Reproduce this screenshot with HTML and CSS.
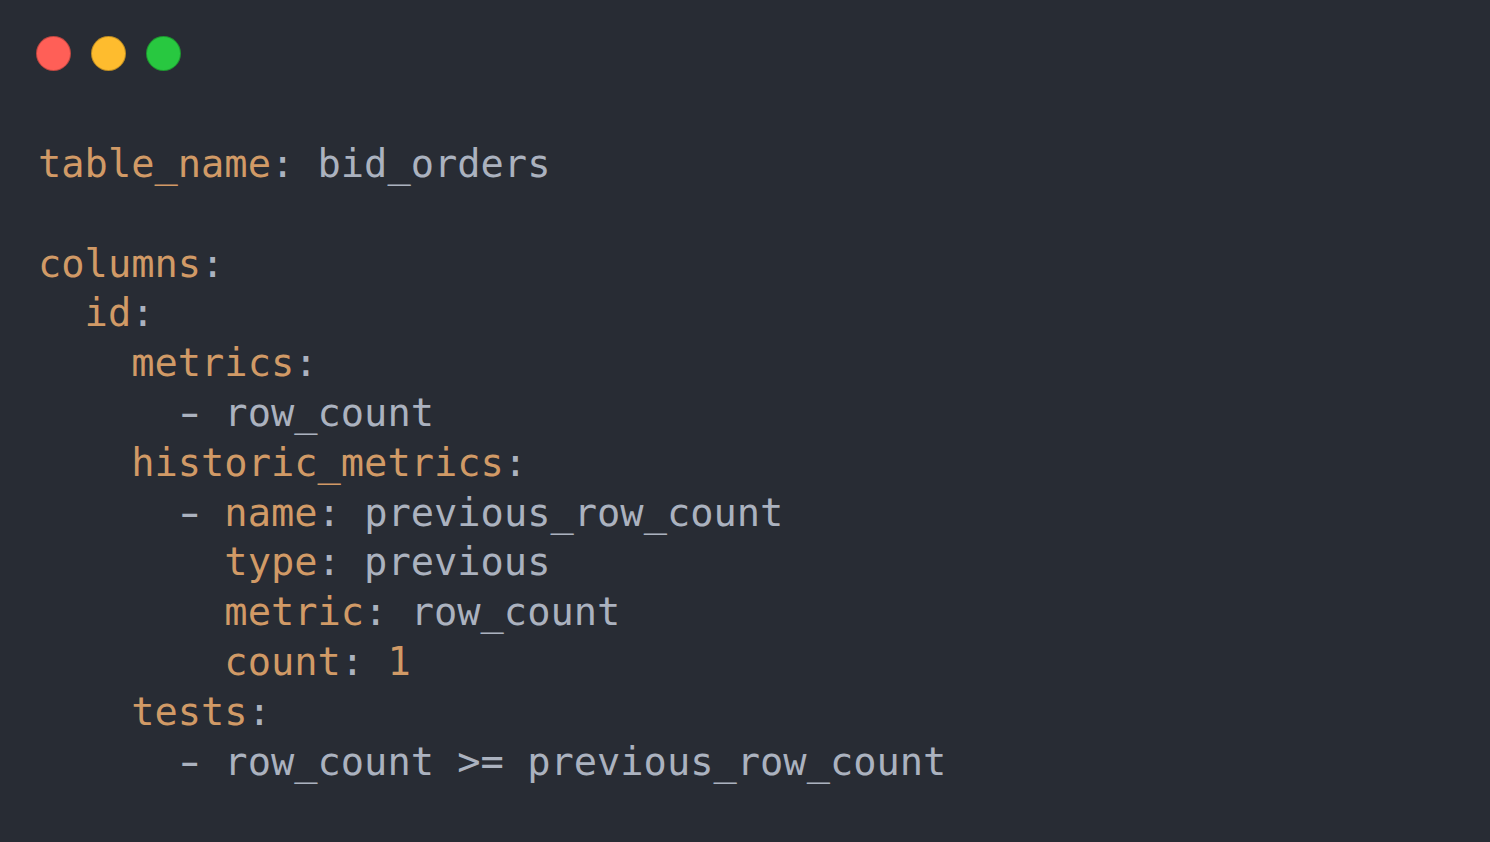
FILE: index.html
```html
<!DOCTYPE html>
<html>
<head>
<meta charset="utf-8">
<link rel="stylesheet" href="styles.css">
</head>
<body>
<div class="window">
  <div class="dots">
    <span class="dot red"></span>
    <span class="dot yellow"></span>
    <span class="dot green"></span>
  </div>
<pre class="code"><span class="k">table_name</span><span class="p">:</span> <span class="v">bid_orders</span>

<span class="k">columns</span><span class="p">:</span>
  <span class="k">id</span><span class="p">:</span>
    <span class="k">metrics</span><span class="p">:</span>
      <span class="dash">-</span> <span class="v">row_count</span>
    <span class="k">historic_metrics</span><span class="p">:</span>
      <span class="dash">-</span> <span class="k">name</span><span class="p">:</span> <span class="v">previous_row_count</span>
        <span class="k">type</span><span class="p">:</span> <span class="v">previous</span>
        <span class="k">metric</span><span class="p">:</span> <span class="v">row_count</span>
        <span class="k">count</span><span class="p">:</span> <span class="n">1</span>
    <span class="k">tests</span><span class="p">:</span>
      <span class="dash">-</span> <span class="v">row_count &gt;= previous_row_count</span></pre>
</div>
</body>
</html>
```

FILE: styles.css
```css
html, body {
  margin: 0;
  padding: 0;
  background: #282c34;
  height: 100%;
}
.window {
  padding: 36px 0 0 36px;
}
.dots {
  display: flex;
  gap: 20px;
}
.dot {
  width: 35px;
  height: 35px;
  border-radius: 50%;
  box-sizing: border-box;
  border: 1px solid rgba(0,0,0,0.25);
}
.red { background: #ff5f57; }
.yellow { background: #febc2e; }
.green { background: #28c840; }
.code {
  margin: 68px 0 0 2px;
  font-family: "DejaVu Sans Mono", monospace;
  font-size: 38.7px;
  line-height: 49.8px;
  color: #abb2bf;
}
.k { color: #d19a66; }
.n { color: #d19a66; }
.p { color: #abb2bf; }
.v { color: #abb2bf; }
.dash {
  display: inline-block;
  transform: scaleX(1.5);
  color: #abb2bf;
}
```
